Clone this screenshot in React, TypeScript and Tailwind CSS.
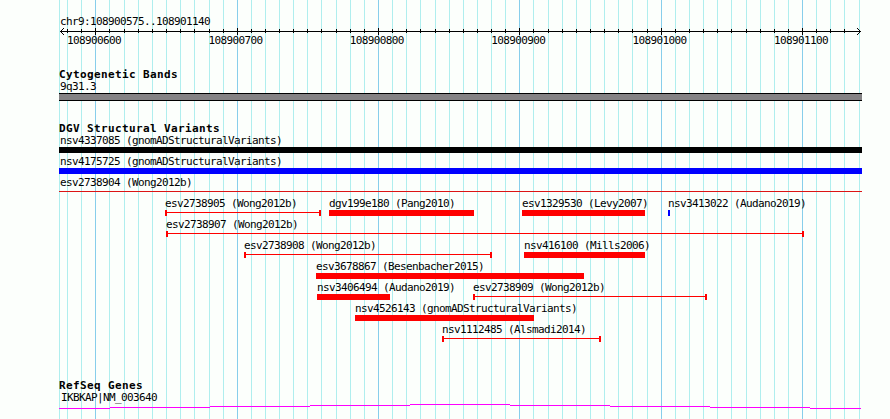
import React from "react";

type Shape = "bar" | "span" | "line";
type Feature = { label: string; start: number; end: number; shape: Shape; color?: string };

const LEFT = 59;
const MAJOR = [95, 237, 378, 519, 661, 802];
const MINOR = [
  59, 67, 81, 109, 124, 138, 152, 166, 180, 194, 209, 223, 251, 265, 279, 293, 307, 321, 336, 350, 364,
  392, 406, 420, 435, 449, 463, 477, 491, 505, 533, 548, 562, 576, 590, 604, 618, 632, 647,
  675, 689, 703, 717, 731, 746, 760, 774, 788, 816, 830, 844, 859,
];
const TICK_LABELS = ["108900600", "108900700", "108900800", "108900900", "108901000", "108901100"];

const ROWS: Feature[][] = [
  [{ label: "nsv4337085 (gnomADStructuralVariants)", start: 59, end: 862, shape: "bar", color: "bg-black" }],
  [{ label: "nsv4175725 (gnomADStructuralVariants)", start: 59, end: 862, shape: "bar", color: "bg-[#0000ff]" }],
  [{ label: "esv2738904 (Wong2012b)", start: 59, end: 862, shape: "line" }],
  [
    { label: "esv2738905 (Wong2012b)", start: 165, end: 321, shape: "span" },
    { label: "dgv199e180 (Pang2010)", start: 329, end: 474, shape: "bar" },
    { label: "esv1329530 (Levy2007)", start: 522, end: 645, shape: "bar" },
    { label: "nsv3413022 (Audano2019)", start: 668, end: 670, shape: "bar", color: "bg-[#0000ff]" },
  ],
  [{ label: "esv2738907 (Wong2012b)", start: 166, end: 804, shape: "span" }],
  [
    { label: "esv2738908 (Wong2012b)", start: 244, end: 492, shape: "span" },
    { label: "nsv416100 (Mills2006)", start: 524, end: 645, shape: "bar" },
  ],
  [{ label: "esv3678867 (Besenbacher2015)", start: 316, end: 584, shape: "bar" }],
  [
    { label: "nsv3406494 (Audano2019)", start: 317, end: 390, shape: "bar" },
    { label: "esv2738909 (Wong2012b)", start: 473, end: 707, shape: "span" },
  ],
  [{ label: "nsv4526143 (gnomADStructuralVariants)", start: 355, end: 534, shape: "bar" }],
  [{ label: "nsv1112485 (Alsmadi2014)", start: 442, end: 601, shape: "span" }],
];

function GridLines() {
  return (
    <svg className="absolute inset-0" width="890" height="419" shapeRendering="crispEdges">
      {MINOR.map((x) => (
        <rect key={x} x={x} y="0" width="1" height="419" fill="#afeeee" />
      ))}
      {MAJOR.map((x) => (
        <rect key={x} x={x} y="0" width="1" height="419" fill="#87ceeb" />
      ))}
    </svg>
  );
}

function Ruler() {
  return (
    <svg className="block" width="890" height="9" shapeRendering="crispEdges">
      <rect x="60" y="4" width="801" height="1" />
      {MINOR.filter((x) => x > 60 && x < 859).map((x) => (
        <rect key={x} x={x} y="2" width="1" height="4" />
      ))}
      {MAJOR.map((x) => (
        <rect key={x} x={x} y="1" width="1" height="7" />
      ))}
      {[1, 2, 3].map((d) => (
        <g key={d}>
          <rect x={60 + d} y={4 - d} width="1" height="1" />
          <rect x={60 + d} y={4 + d} width="1" height="1" />
          <rect x={860 - d} y={4 - d} width="1" height="1" />
          <rect x={860 - d} y={4 + d} width="1" height="1" />
        </g>
      ))}
    </svg>
  );
}

function Heading({ children }: { children: React.ReactNode }) {
  return (
    <h2 className="h-3 pl-[59px] text-[11px] leading-3 font-bold tracking-[0.378px] whitespace-pre">{children}</h2>
  );
}

function Glyph({ shape, color = "bg-[#ff0000]" }: { shape: Shape; color?: string }) {
  if (shape === "bar") return <div className={`h-1.5 ${color}`} />;
  if (shape === "line")
    return (
      <div className="h-1.5 pt-0.5">
        <div className="h-px bg-[#dc1414]" />
      </div>
    );
  return (
    <div className="flex h-1.5">
      <div className="w-0.5 bg-[#ff0000]" />
      <div className="mt-0.5 h-px grow bg-[#ff0000]" />
      <div className="w-0.5 bg-[#ff0000]" />
    </div>
  );
}

function TrackRow({ features }: { features: Feature[] }) {
  return (
    <div className="flex h-[21px]">
      {features.map((f, i) => (
        <div
          key={f.label}
          className="shrink-0"
          style={{ marginLeft: f.start - (i ? features[i - 1].end : 0), width: f.end - f.start }}
        >
          <div className={`h-[15px] pt-0.5 leading-[13px] whitespace-pre ${f.start === LEFT ? "pl-px" : ""}`}>
            {f.label}
          </div>
          <Glyph shape={f.shape} color={f.color} />
        </div>
      ))}
    </div>
  );
}

function GeneProfile() {
  return (
    <svg className="block" width="890" height="6" shapeRendering="crispEdges" fill="#ff00ff">
      {[4, 3, 2, 1, 0, 1, 2, 3, 4].map((y, i) => {
        const start = i === 0 ? 59 : 10 + i * 100;
        const end = i === 8 ? 861 : 110 + i * 100;
        return <rect key={i} x={start} y={y} width={end - start} height="1" />;
      })}
    </svg>
  );
}

export default function App() {
  return (
    <main className="relative h-[419px] w-[890px] overflow-hidden bg-[#fcfffc] font-['DejaVu_Sans_Mono',monospace] text-[11px] tracking-[-0.622px] text-black">
      <GridLines />
      <div className="relative flex flex-col">
        <header className="h-[69px] pt-[15px]">
          <div className="h-3 pl-[60px] leading-[13px]">chr9:108900575..108901140</div>
          <Ruler />
          <div className="flex h-3 pl-[67px] leading-[10px]">
            {TICK_LABELS.map((t) => (
              <span key={t} className="w-[141.4px] shrink-0">
                {t}
              </span>
            ))}
          </div>
        </header>

        <section className="h-[54px]">
          <Heading>Cytogenetic Bands</Heading>
          <div className="h-3 pl-[60px] leading-3">9q31.3</div>
          <div className="ml-[59px] h-2 w-[803px] border-y border-black bg-[#848284]" />
        </section>

        <section className="h-[257px]">
          <Heading>DGV Structural Variants</Heading>
          <div className="-mt-[3px]">
            {ROWS.map((row) => (
              <TrackRow key={row[0].label} features={row} />
            ))}
          </div>
        </section>

        <section>
          <Heading>RefSeq Genes</Heading>
          <div className="h-3 pl-[61px] leading-3">IKBKAP|NM_003640</div>
          <GeneProfile />
        </section>
      </div>
    </main>
  );
}
